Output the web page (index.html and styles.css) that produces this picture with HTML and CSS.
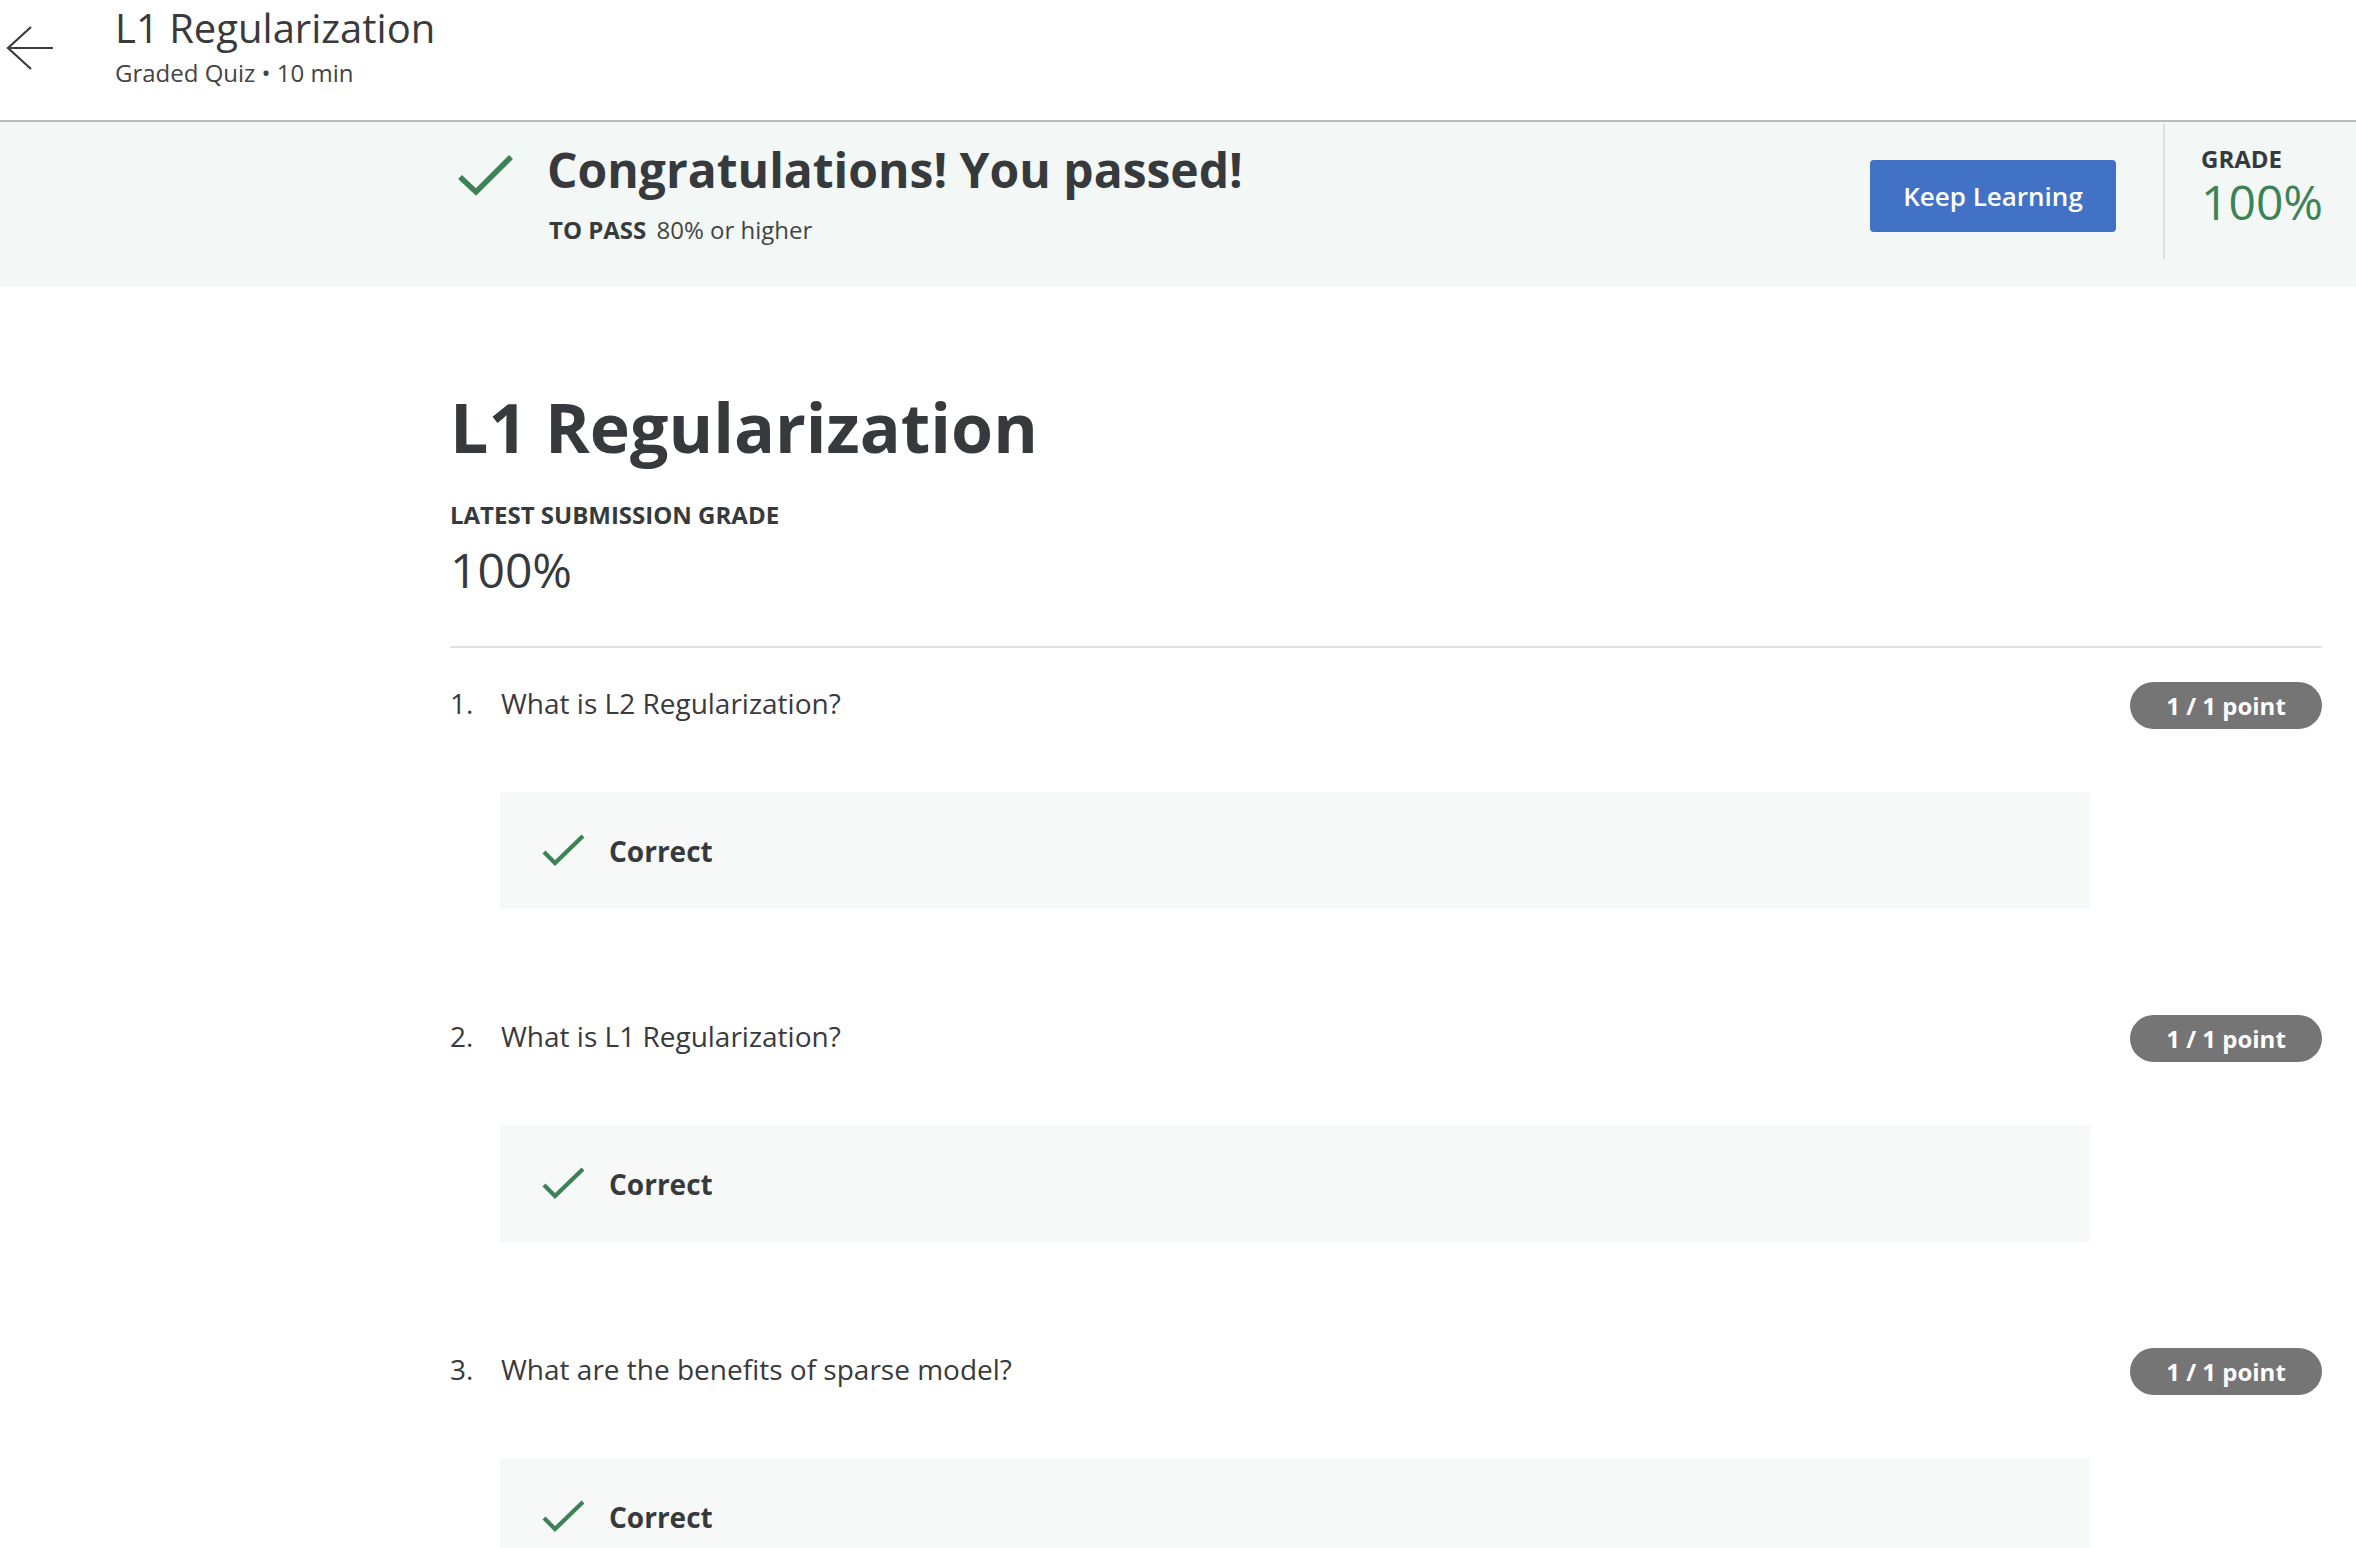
FILE: index.html
```html
<!DOCTYPE html>
<html lang="en">
<head>
<meta charset="utf-8">
<title>L1 Regularization</title>
<link rel="stylesheet" href="styles.css">
</head>
<body>
<header class="topbar">
  <svg class="back" width="48" height="48" viewBox="0 0 48 48" aria-hidden="true">
    <path d="M25 3 L2 24 L25 45 M2 24 L47 24" fill="none" stroke="#3c3c3c" stroke-width="2.2"/>
  </svg>
  <div class="top-titles">
    <div class="top-title">L1 Regularization</div>
    <div class="top-sub">Graded Quiz • 10 min</div>
  </div>
</header>

<section class="banner">
  <svg class="banner-check" width="60" height="50" viewBox="0 0 60 50" aria-hidden="true">
    <path d="M5 27 L21 42 L56 7" fill="none" stroke="#3d8256" stroke-width="5.5"/>
  </svg>
  <div class="banner-text">
    <h2 class="congrats">Congratulations! You passed!</h2>
    <div class="to-pass"><span class="to-pass-label">TO PASS</span> 80% or higher</div>
  </div>
  <button class="keep">Keep Learning</button>
  <div class="vdiv"></div>
  <div class="grade">
    <div class="grade-label">GRADE</div>
    <div class="grade-value">100%</div>
  </div>
</section>

<main class="content">
  <h1 class="quiz-title">L1 Regularization</h1>
  <div class="sub-label">LATEST SUBMISSION GRADE</div>
  <div class="sub-value">100%</div>
  <div class="rule"></div>

  <div class="question">
    <div class="q-row">
      <span class="q-num">1.</span>
      <span class="q-text">What is L2 Regularization?</span>
      <span class="badge">1 / 1 point</span>
    </div>
    <div class="result">
      <svg class="res-check" width="48" height="36" viewBox="0 0 48 36" aria-hidden="true">
        <path d="M4 19 L15 30 L43 3" fill="none" stroke="#3d8256" stroke-width="4.2"/>
      </svg>
      <span class="res-text">Correct</span>
    </div>
  </div>

  <div class="question">
    <div class="q-row">
      <span class="q-num">2.</span>
      <span class="q-text">What is L1 Regularization?</span>
      <span class="badge">1 / 1 point</span>
    </div>
    <div class="result">
      <svg class="res-check" width="48" height="36" viewBox="0 0 48 36" aria-hidden="true">
        <path d="M4 19 L15 30 L43 3" fill="none" stroke="#3d8256" stroke-width="4.2"/>
      </svg>
      <span class="res-text">Correct</span>
    </div>
  </div>

  <div class="question">
    <div class="q-row">
      <span class="q-num">3.</span>
      <span class="q-text">What are the benefits of sparse model?</span>
      <span class="badge">1 / 1 point</span>
    </div>
    <div class="result">
      <svg class="res-check" width="48" height="36" viewBox="0 0 48 36" aria-hidden="true">
        <path d="M4 19 L15 30 L43 3" fill="none" stroke="#3d8256" stroke-width="4.2"/>
      </svg>
      <span class="res-text">Correct</span>
    </div>
  </div>
</main>
</body>
</html>
```
FILE: styles.css
```css
* { box-sizing: border-box; }
html, body { margin: 0; padding: 0; background: #ffffff; }
body {
  font-family: "Open Sans", "Noto Sans", "Liberation Sans", sans-serif;
  color: #373a3c;
}

.topbar {
  height: 122px;
  border-bottom: 2px solid #bbbbbb;
  display: flex;
  align-items: flex-start;
  padding-left: 6px;
}
.back { margin-top: 24px; flex: none; }
.top-titles { margin-left: 61px; padding-top: 4px; }
.top-title { font-size: 40px; line-height: 48px; color: #3a3a3a; }
.top-sub { font-size: 24px; line-height: 32px; color: #444444; margin-top: 5px; }

.banner {
  height: 165px;
  background: #f3f8f6;
  display: flex;
  align-items: flex-start;
  padding-left: 455px;
}
.banner-check { margin-top: 28px; flex: none; }
.banner-text { margin-left: 32px; margin-top: 18px; }
.congrats {
  margin: 0;
  font-size: 48px;
  line-height: 60px;
  font-weight: 700;
  color: #373a3c;
}
.to-pass { margin-top: 15px; padding-left: 2px; font-size: 24px; line-height: 30px; color: #444; }
.to-pass-label { font-weight: 700; color: #373a3c; margin-right: 4px; }

.keep {
  margin-left: auto;
  margin-top: 38px;
  width: 246px;
  height: 72px;
  border: none;
  border-radius: 4px;
  background: #4272c5;
  color: #ffffff;
  font-family: inherit;
  font-size: 26px;
  font-weight: 600;
  padding: 0;
}
.vdiv { margin-left: 47px; margin-top: 2px; width: 2px; height: 135px; background: #dddddd; }
.grade { margin-left: 36px; width: 155px; margin-top: 27px; }
.grade-label { font-size: 24px; line-height: 20px; font-weight: 700; color: #373a3c; }
.grade-value { margin-top: 1px; font-size: 48px; line-height: 64px; color: #3d8256; }

.content { padding: 0 34px 0 450px; }
.quiz-title {
  margin: 97px 0 0 0;
  font-size: 68px;
  line-height: 86px;
  font-weight: 700;
  color: #373a3c;
}
.sub-label { margin-top: 30px; font-size: 24px; line-height: 30px; font-weight: 700; }
.sub-value { margin-top: 10px; font-size: 48px; line-height: 60px; }
.rule { margin-top: 46px; height: 2px; background: #e1e1e1; }

.question { padding-top: 34px; padding-bottom: 72px; }
.q-row {
  display: grid;
  grid-template-columns: 51px 1fr auto;
  align-items: start;
}
.q-num, .q-text { font-size: 28px; line-height: 40px; margin-top: 1px; color: #3a3a3a; }
.badge {
  width: 192px;
  height: 47px;
  border-radius: 24px;
  background: #757575;
  color: #ffffff;
  font-size: 24px;
  line-height: 47px;
  font-weight: 700;
  text-align: center;
}
.result {
  margin: 63px 232px 0 50px;
  height: 117px;
  background: #f7f9f9;
  display: flex;
  align-items: center;
  padding-left: 40px;
}
.res-check { flex: none; }
.res-text { margin-left: 21px; font-size: 28px; font-weight: 700; color: #373a3c; }
```
